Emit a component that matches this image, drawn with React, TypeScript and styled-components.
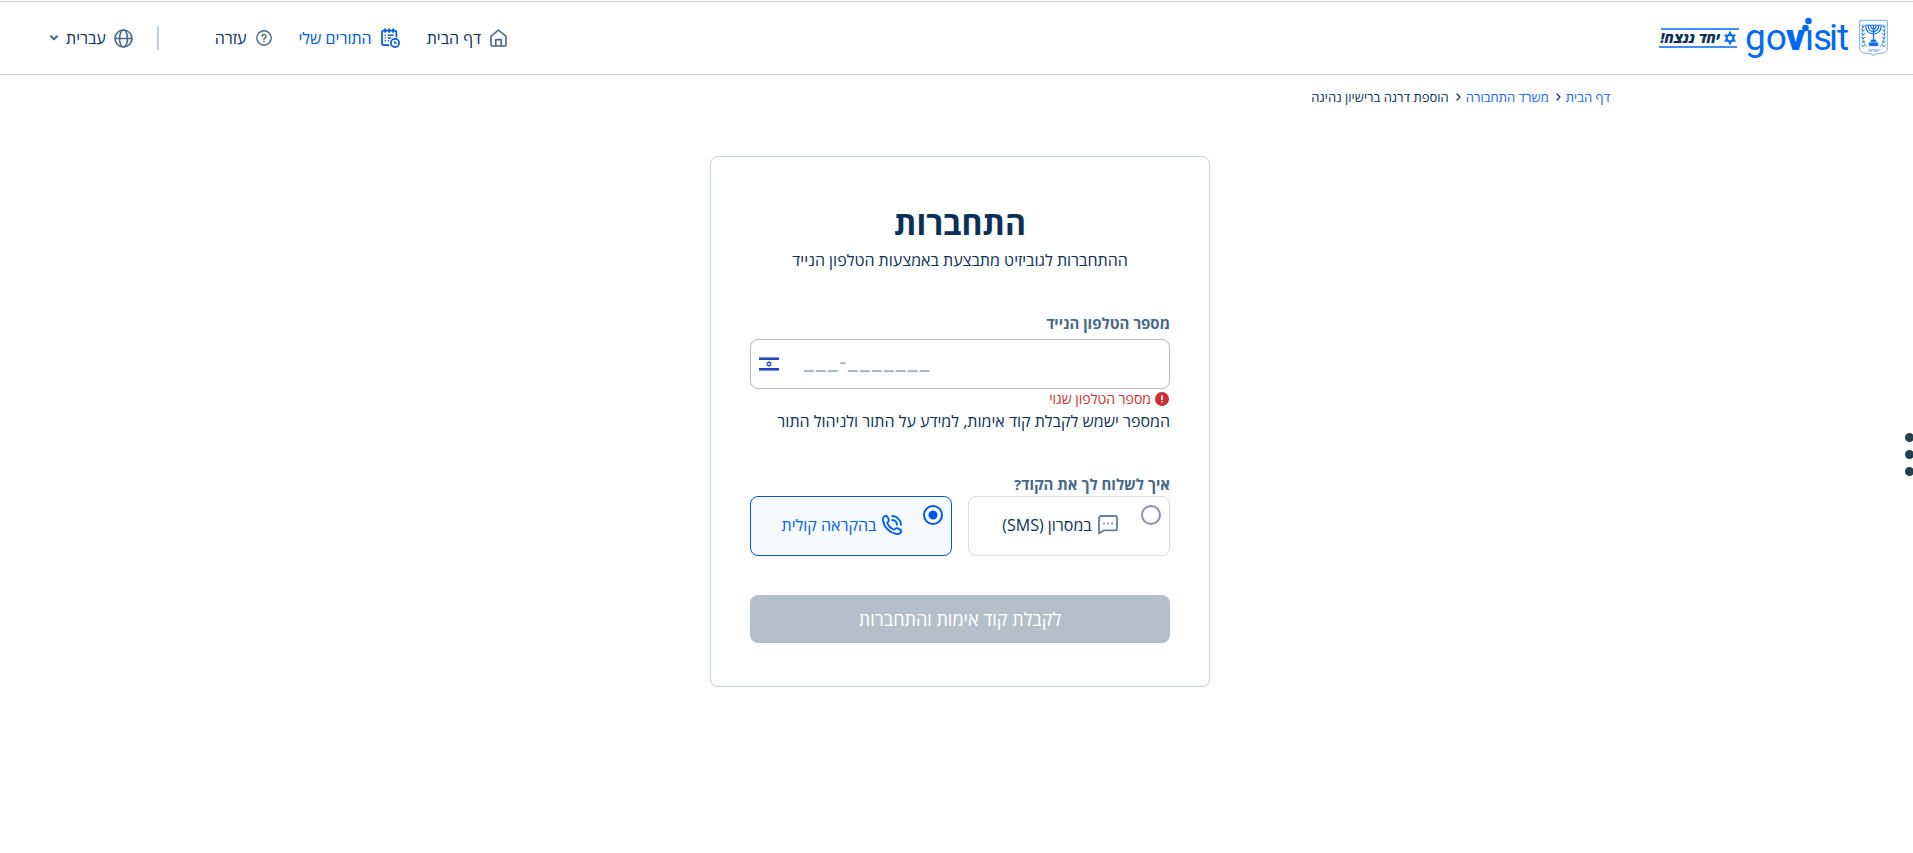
import React, { useState } from "react";
import styled, { createGlobalStyle } from "styled-components";

const navy = "#0b3058";
const slate = "#476788";
const blue = "#0056dd";

const GlobalStyle = createGlobalStyle`
  * { box-sizing: border-box; }
  html, body { margin: 0; background: #fff; overflow-x: hidden; }
  body, button, input {
    font-family: "Open Sans", "Noto Sans", "Liberation Sans", sans-serif;
    font-size: 16px;
    color: ${navy};
  }
`;

const Page = styled.div`
  position: relative;
  min-height: 100vh;
  padding-top: 1px;
  overflow: hidden;
`;

const Header = styled.header`
  display: flex;
  align-items: center;
  justify-content: space-between;
  height: 74px;
  padding: 0 25px 0 50px;
  border-top: 1px solid #cccccc;
  border-bottom: 1px solid #c1cbe8;
`;

const Brand = styled.a`
  display: flex;
  align-items: center;
  gap: 8px;
  text-decoration: none;
  svg { overflow: visible; }
`;

const Tools = styled.div`
  display: flex;
  align-items: center;
  gap: 24px;
`;

const Nav = styled.nav`
  display: flex;
  gap: 27px;
  margin-left: 32px;
`;

const NavLink = styled.a<{ $active?: boolean }>`
  display: flex;
  align-items: center;
  gap: 9px;
  line-height: 24px;
  color: ${(p) => (p.$active ? blue : navy)};
  text-decoration: none;
  white-space: nowrap;
  svg { color: ${(p) => (p.$active ? blue : slate)}; }
`;

const Divider = styled.span`
  width: 2px;
  height: 24px;
  background: #c1cfe9;
`;

const LanguageButton = styled.button`
  display: flex;
  align-items: center;
  gap: 8px;
  padding: 0;
  border: 0;
  background: none;
  line-height: 24px;
  cursor: pointer;
  svg { color: ${slate}; }
`;

const Main = styled.main`
  max-width: 1307px;
  margin: 0 auto;
  padding: 12px 0 32px 7px;
`;

const Breadcrumbs = styled.ol`
  display: flex;
  align-items: center;
  gap: 7px;
  margin: 0;
  padding: 0;
  list-style: none;
  font-size: 13px;
  line-height: 20px;
`;

const Crumb = styled.li`
  display: flex;
  align-items: center;
  gap: 5px;
  a { color: #1763f6; text-decoration: none; }
`;

const Card = styled.form`
  display: flex;
  flex-direction: column;
  width: 100%;
  max-width: 500px;
  margin: 49px auto 0;
  padding: 46px 39px 43px;
  border: 1px solid #c1cfe9;
  border-radius: 8px;
`;

const Title = styled.h1`
  margin: 0;
  font-size: 32px;
  line-height: 40px;
  font-weight: 700;
  text-align: center;
`;

const Subtitle = styled.p`
  margin: 5px 0 0;
  line-height: 24px;
  text-align: center;
`;

const FieldLabel = styled.label`
  margin-top: 39px;
  font-size: 15px;
  line-height: 24px;
  font-weight: 700;
  color: ${slate};
`;

const PhoneBox = styled.div`
  display: flex;
  direction: ltr;
  align-items: center;
  gap: 25px;
  height: 50px;
  margin-top: 4px;
  padding: 0 8px;
  border: 1px solid #b8b4cb;
  border-radius: 8px;
`;

const PhoneInput = styled.input`
  flex: 1;
  min-width: 0;
  height: 40px;
  padding: 0 0 4px;
  border: 0;
  outline: 0;
  background: none;
  font-family: Roboto, "Liberation Sans", sans-serif;
  font-size: 22px;
  letter-spacing: 2px;
  &::placeholder { color: #a3aebe; opacity: 1; }
`;

const ErrorText = styled.p`
  display: flex;
  align-items: center;
  gap: 4px;
  margin: 0;
  padding-right: 1px;
  font-size: 14px;
  line-height: 20px;
  color: #c93030;
`;

const Hint = styled.p`
  margin: 0;
  line-height: 24px;
`;

const Choice = styled.fieldset`
  min-width: 0;
  margin: 39px 0 0;
  padding: 0;
  border: 0;
`;

const Legend = styled.legend`
  padding: 0;
  font-size: 15px;
  line-height: 24px;
  font-weight: 700;
  color: ${slate};
`;

const Options = styled.div`
  display: grid;
  grid-template-columns: 1fr 1fr;
  gap: 16px;
`;

const Option = styled.label<{ $selected: boolean }>`
  display: flex;
  align-items: center;
  height: 60px;
  padding: 8px 8px 10px 10px;
  border: 1px solid ${(p) => (p.$selected ? blue : "#d8dde4")};
  border-radius: 8px;
  background: ${(p) => (p.$selected ? "#f6faff" : "#fff")};
  color: ${(p) => (p.$selected ? "#0060ee" : navy)};
  cursor: pointer;
`;

const Radio = styled.input`
  appearance: none;
  flex: none;
  align-self: flex-start;
  width: 20px;
  height: 20px;
  margin: 0;
  border: 2px solid #918ca9;
  border-radius: 50%;
  background: #fff;
  &:checked {
    border-color: ${blue};
    background: radial-gradient(circle, ${blue} 4px, #fff 5px);
  }
`;

const OptionBody = styled.span`
  display: flex;
  flex: 1;
  align-items: center;
  justify-content: center;
  gap: 6px;
  line-height: 24px;
  white-space: nowrap;
`;

const Submit = styled.button`
  height: 48px;
  margin-top: 39px;
  border: 0;
  border-radius: 8px;
  background: #b5bfcc;
  color: #fff;
  font-size: 18px;
`;

const SideMenu = styled.button`
  position: absolute;
  top: 433px;
  right: -1px;
  display: grid;
  gap: 8px;
  padding: 0;
  border: 0;
  background: none;
`;

const Dot = styled.span`
  width: 9px;
  height: 9px;
  border-radius: 50%;
  background: #24404f;
`;

const stroke = {
  fill: "none",
  stroke: "currentColor",
  strokeLinecap: "round" as const,
  strokeLinejoin: "round" as const,
};

const HomeIcon = () => (
  <svg width="17" height="18" viewBox="0 0 17 18" {...stroke} strokeWidth="1.6">
    <path d="M1 7.4 8.5 1 16 7.4V16a1 1 0 0 1-1 1H2a1 1 0 0 1-1-1z" />
    <path d="M5.8 17v-6.4h5.4V17" />
  </svg>
);

const CalendarIcon = () => (
  <svg width="19" height="20" viewBox="0 0 19 20" {...stroke} strokeWidth="1.7">
    <path d="M7.600 17.200H2.600A1.600 1.600 0 0 1 1 15.600V4.200a1.600 1.600 0 0 1 1.600-1.600h11.200a1.600 1.600 0 0 1 1.600 1.600V8.600" />
    <path d="M4.200 1v3M8.200 1v3M12.200 1v3" />
    <path d="M4.200 7.200h.1M4.200 10h.1M4.200 12.800h.1M7.400 7.200h4.600M7.400 10h2.200M7.400 12.800h.2" strokeWidth="1.500" />
    <circle cx="14" cy="15" r="4.100" />
    <path d="M13.800 13.400v1.800h1.600" strokeWidth="1.300" />
  </svg>
);

const HelpIcon = () => (
  <svg width="16" height="16" viewBox="0 0 16 16" {...stroke} strokeWidth="1.4">
    <circle cx="8" cy="8" r="7.200" />
    <path d="M6 6.400a2 2 0 1 1 2.900 1.800c-.6.3-.9.600-.9 1.200" />
    <path d="M8 11.600v.1" strokeWidth="1.600" />
  </svg>
);

const GlobeIcon = () => (
  <svg width="19" height="19" viewBox="0 0 19 19" {...stroke} strokeWidth="1.600">
    <circle cx="9.500" cy="9.500" r="8.500" />
    <ellipse cx="9.500" cy="9.500" rx="4" ry="8.500" />
    <path d="M1.400 9.500h16.200" />
  </svg>
);

const ChevronIcon = () => (
  <svg width="8" height="6" viewBox="0 0 8 6" {...stroke} strokeWidth="2">
    <path d="M1 1.200 4 4.200 7 1.200" />
  </svg>
);

const CrumbArrow = () => (
  <svg width="5" height="8" viewBox="0 0 5 8" {...stroke} strokeWidth="1.200" aria-hidden="true">
    <path d="M1 1 4 4 1 7" />
  </svg>
);

const FlagIcon = () => (
  <svg width="20" height="16" viewBox="0 0 20 16" aria-hidden="true">
    <rect width="20" height="16" fill="#f1f2f6" />
    <rect y="3" width="20" height="10" fill="#fff" />
    <rect y="1.500" width="20" height="2.500" fill="#1d46c0" />
    <rect y="12" width="20" height="2.500" fill="#1d46c0" />
    <path d="M10 5.200 12.300 9.300H7.700zM10 10.700 7.700 6.600h4.600z" fill="none" stroke="#1d46c0" strokeWidth=".8" />
  </svg>
);

const ErrorIcon = () => (
  <svg width="14" height="14" viewBox="0 0 14 14" aria-hidden="true">
    <circle cx="7" cy="7" r="7" fill="#c93030" />
    <path d="M7 3.800v3.600M7 9.900v.1" stroke="#fff" strokeWidth="1.600" strokeLinecap="round" />
  </svg>
);

const MessageIcon = () => (
  <svg width="20" height="20" viewBox="0 0 20 20" {...stroke} stroke="#64809c" strokeWidth="1.800">
    <path d="M1 18.600V3a2 2 0 0 1 2-2h14a2 2 0 0 1 2 2v10.400a2 2 0 0 1-2 2H5.800z" />
    <path d="M6 8.500h.1M10 8.500h.1M14 8.500h.1" />
  </svg>
);

const CallIcon = () => (
  <svg width="20" height="20" viewBox="0 0 20 20" {...stroke} strokeWidth="1.900">
    <path d="M2.200 1.500C3 .9 4.400.8 5.200 1.700 6 2.600 6.600 3.800 6.800 4.800c.2 1-.3 1.600-.9 2.200-.6.600-.7 1-.4 1.700 1.100 2.500 3.300 4.700 5.800 5.800.7.300 1.100.2 1.700-.4.600-.6 1.200-1.100 2.200-.9 1 .2 2.200.8 3.100 1.600.9.800.8 2.200.2 3-.9 1.200-2.300 1.400-3.800 1.200C7.900 18.100 1.900 12.100 1 5.300.8 3.800 1 2.400 2.200 1.500z" />
    <path d="M10.200 1c4.800 0 8.800 4 8.800 8.800M10.200 5c2.600 0 4.800 2.200 4.800 4.800" />
  </svg>
);

const Slogan = () => (
  <svg width="80" height="22" viewBox="0 0 80 22" role="img" aria-label="יחד ננצח!">
    <path d="M2 2H80M0 20H78" stroke="#0068f5" strokeWidth="1.400" />
    <path d="M71 5.200 75.800 14H66.200zM71 17 66.200 8.200h9.600z" fill="none" stroke="#0068f5" strokeWidth="1.400" />
    <text
      x="61"
      y="16"
      direction="rtl"
      fontFamily="Open Sans, Liberation Sans, sans-serif"
      fontSize="14"
      fontWeight="800"
      fontStyle="italic"
      fill="#0b3058"
    >
      יחד ננצח!
    </text>
  </svg>
);

const Wordmark = () => (
  <svg width="104" height="44" viewBox="0 0 104 44" role="img" aria-label="govisit" direction="ltr" fill="#0068f5">
    <g fontFamily="Roboto, Liberation Sans, sans-serif" fontSize="37">
      <text x="-2" y="34">go</text>
      <text x="39" y="34" fontWeight="900">v</text>
      <text x="58" y="34">ı</text>
      <text x="66" y="34">s</text>
      <text x="82" y="34">i</text>
      <text x="90" y="34">t</text>
    </g>
    <circle cx="58.500" cy="12" r="3.300" />
    <circle cx="61.500" cy="5" r="3.300" />
  </svg>
);

const leafRows = [6, 10, 14, 18, 22, 26];

const Emblem = () => (
  <svg width="29" height="38" viewBox="0 0 30 38" fill="none" stroke="#0068f5" aria-hidden="true">
    <path d="M.7.7h28.600v28.600c0 4-3 5.200-7 5.500-3.400.2-5.600.8-7.300 2.300-1.700-1.500-3.900-2.100-7.300-2.300-4-.3-7-1.500-7-5.500z" strokeWidth=".8" opacity=".7" />
    <path d="M7 6.500c0 11 16 11 16 0M9.700 6.500c0 7.500 10.600 7.500 10.600 0M12.300 6.500c0 3.800 5.400 3.800 5.400 0M15 6v15" strokeWidth="1.200" />
    <path d="M6.500 5.800h17" strokeWidth="1.100" />
    <path d="M12.500 21h5v2h-5zM10.500 24h9v3h-9z" fill="#0068f5" strokeWidth=".6" />
    <path d="M4.500 5C2.500 12 3 22 8 28.500M25.500 5c2 7 1.500 17-3.500 23.500" strokeWidth=".6" />
    {leafRows.map((y) => (
      <path key={y} d={`M2.800 ${y}l1.500 2 1.700-2M24 ${y}l1.700 2 1.500-2`} strokeWidth=".9" />
    ))}
    <text x="15" y="33" textAnchor="middle" fontFamily="Open Sans, sans-serif" fontSize="5" fill="#0068f5" stroke="none">
      ישראל
    </text>
  </svg>
);

export default function App() {
  const [method, setMethod] = useState("voice");
  const [phone, setPhone] = useState("");

  return (
    <Page dir="rtl" lang="he">
      <GlobalStyle />
      <Header>
        <Brand href="#">
          <Emblem />
          <Wordmark />
          <Slogan />
        </Brand>
        <Tools>
          <Nav>
            <NavLink href="#"><HomeIcon />דף הבית</NavLink>
            <NavLink href="#" $active><CalendarIcon />התורים שלי</NavLink>
            <NavLink href="#"><HelpIcon />עזרה</NavLink>
          </Nav>
          <Divider />
          <LanguageButton type="button"><GlobeIcon />עברית<ChevronIcon /></LanguageButton>
        </Tools>
      </Header>

      <Main>
        <Breadcrumbs>
          <Crumb><a href="#">דף הבית</a><CrumbArrow /></Crumb>
          <Crumb><a href="#">משרד התחבורה</a><CrumbArrow /></Crumb>
          <Crumb>הוספת דרגה ברישיון נהיגה</Crumb>
        </Breadcrumbs>

        <Card onSubmit={(e) => e.preventDefault()}>
          <Title>התחברות</Title>
          <Subtitle>ההתחברות לגוביזיט מתבצעת באמצעות הטלפון הנייד</Subtitle>

          <FieldLabel htmlFor="phone">מספר הטלפון הנייד</FieldLabel>
          <PhoneBox>
            <FlagIcon />
            <PhoneInput
              id="phone"
              type="tel"
              placeholder="___-_______"
              value={phone}
              onChange={(e) => setPhone(e.target.value)}
              aria-describedby="phone-error phone-hint"
            />
          </PhoneBox>
          <ErrorText id="phone-error"><ErrorIcon />מספר הטלפון שגוי</ErrorText>
          <Hint id="phone-hint">המספר ישמש לקבלת קוד אימות, למידע על התור ולניהול התור</Hint>

          <Choice>
            <Legend>איך לשלוח לך את הקוד?</Legend>
            <Options>
              <Option $selected={method === "sms"}>
                <Radio type="radio" name="method" checked={method === "sms"} onChange={() => setMethod("sms")} />
                <OptionBody><MessageIcon />במסרון (SMS)</OptionBody>
              </Option>
              <Option $selected={method === "voice"}>
                <Radio type="radio" name="method" checked={method === "voice"} onChange={() => setMethod("voice")} />
                <OptionBody><CallIcon />בהקראה קולית</OptionBody>
              </Option>
            </Options>
          </Choice>

          <Submit type="submit" disabled>לקבלת קוד אימות והתחברות</Submit>
        </Card>
      </Main>

      <SideMenu type="button" aria-label="תפריט נגישות">
        <Dot /><Dot /><Dot />
      </SideMenu>
    </Page>
  );
}
